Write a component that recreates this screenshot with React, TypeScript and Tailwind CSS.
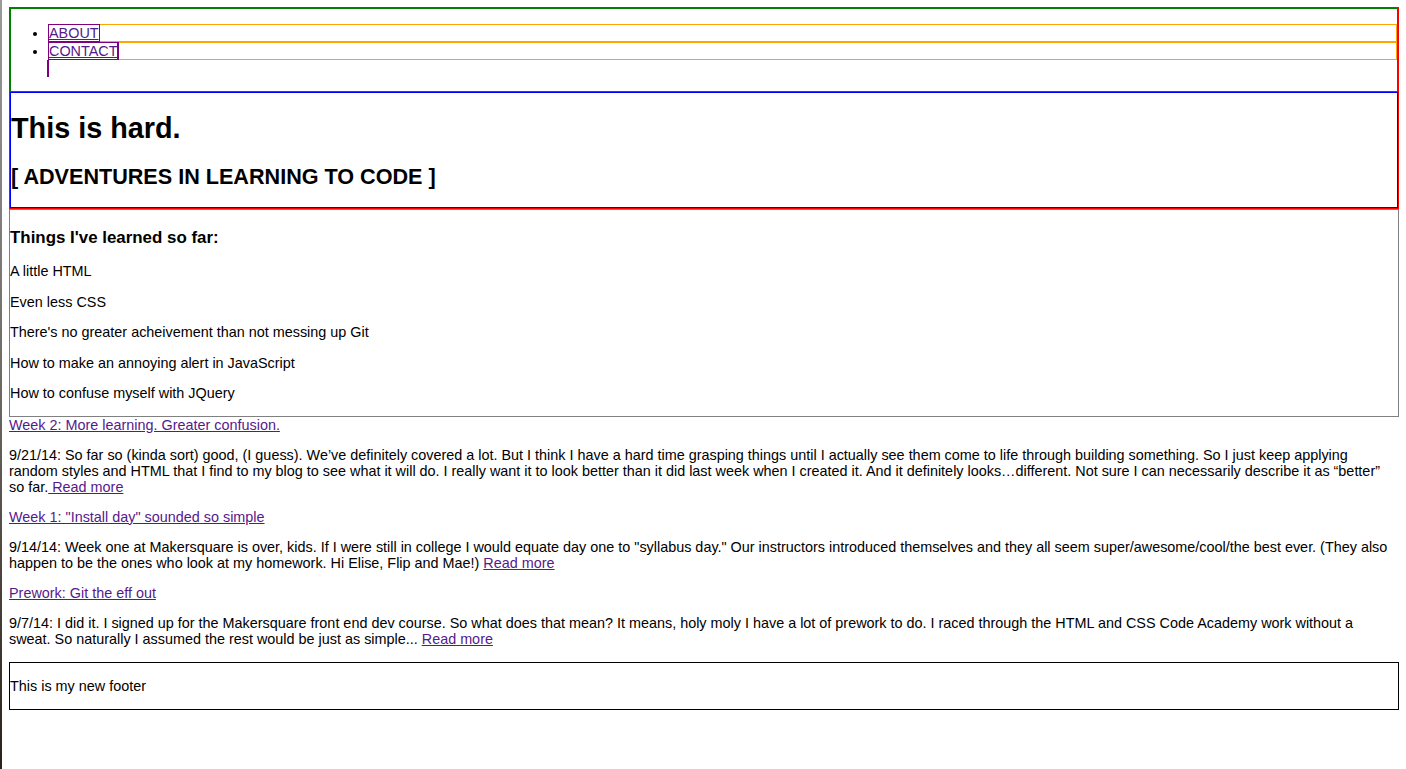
import React from 'react';

const posts = [
  {
    title: 'Week 2: More learning. Greater confusion.',
    body: '9/21/14: So far so (kinda sort) good, (I guess). We\u2019ve definitely covered a lot. But I think I have a hard time grasping things until I actually see them come to life through building something. So I just keep applying random styles and HTML that I find to my blog to see what it will do. I really want it to look better than it did last week when I created it. And it definitely looks\u2026different. Not sure I can necessarily describe it as \u201cbetter\u201d so far.',
    more: ' Read more',
  },
  {
    title: 'Week 1: "Install day" sounded so simple',
    body: '9/14/14: Week one at Makersquare is over, kids. If I were still in college I would equate day one to "syllabus day." Our instructors introduced themselves and they all seem super/awesome/cool/the best ever. (They also happen to be the ones who look at my homework. Hi Elise, Flip and Mae!) ',
    more: 'Read more',
  },
  {
    title: 'Prework: Git the eff out',
    body: '9/7/14: I did it. I signed up for the Makersquare front end dev course. So what does that mean? It means, holy moly I have a lot of prework to do. I raced through the HTML and CSS Code Academy work without a sweat. So naturally I assumed the rest would be just as simple... ',
    more: 'Read more',
  },
];

const learned = [
  'A little HTML',
  'Even less CSS',
  "There's no greater acheivement than not messing up Git",
  'How to make an annoying alert in JavaScript',
  'How to confuse myself with JQuery',
];

export default function App() {
  return (
    <div className="flex min-h-[769px] bg-white font-['Liberation_Sans',Arial,sans-serif] text-[14.4px] leading-[16px] text-black">
      {/* window edge */}
      <div className="w-[2px] shrink-0 bg-gradient-to-b from-[#9a9a9a] via-[#6e6a66] to-[#2a2218]" />

      <main className="flex-1 px-[7px] pt-[7px]">
        {/* Masthead */}
        <div className="border border-[#ff0000]">
          <header className="border border-[#008000]">
            <ul className="mt-[15px] mb-[14px] pl-[37px] list-disc">
              <li className="h-[18px] border-y border-r border-[#ffa500]">
                <a href="#" className="inline-block align-top -mt-px h-[18px] border border-[#800080] text-[#551a8b] underline">
                  ABOUT
                </a>
              </li>
              <li className="h-[18px] border-y border-r border-[#ffa500]">
                <a href="#" className="inline-block align-top -mt-px h-[18px] border border-r-2 border-[#800080] text-[#551a8b] underline">
                  CONTACT
                </a>
              </li>
              <li className="list-none h-[17px]">
                <span className="block -ml-px w-[2px] h-[17px] bg-[#800080]" />
              </li>
            </ul>
          </header>
          <section className="border border-[#0000ff]">
            <h1 className="mt-[19px] text-[28.8px] leading-[32px] font-bold">This is hard.</h1>
            <h2 className="mt-[21px] mb-[18px] text-[21.6px] leading-[24px] font-bold">[ ADVENTURES IN LEARNING TO CODE ]</h2>
          </section>
        </div>

        {/* Things learned */}
        <div className="border border-[#808080]">
          <h3 className="mt-[18px] text-[16.9px] leading-[19px] font-bold">Things I've learned so far:</h3>
          {learned.map((item, i) => (
            <p key={i} className={`leading-[16.5px] ${i === 0 ? 'mt-[16px]' : 'mt-[14px]'} ${i === learned.length - 1 ? 'mb-[14px]' : ''}`}>
              {item}
            </p>
          ))}
        </div>

        {/* Posts */}
        {posts.map((post, i) => (
          <div key={i} className={i === 0 ? '' : 'mt-[14px]'}>
            <a href="#" className="block w-fit text-[#551a8b] underline">
              {post.title}
            </a>
            <p className="mt-[14px] pr-[3px]">
              {post.body}
              <a href="#" className="text-[#551a8b] underline">{post.more}</a>
            </p>
          </div>
        ))}

        {/* Footer */}
        <footer className="mt-[15px] border border-black">
          <p className="my-[15px]">This is my new footer</p>
        </footer>
      </main>
    </div>
  );
}
